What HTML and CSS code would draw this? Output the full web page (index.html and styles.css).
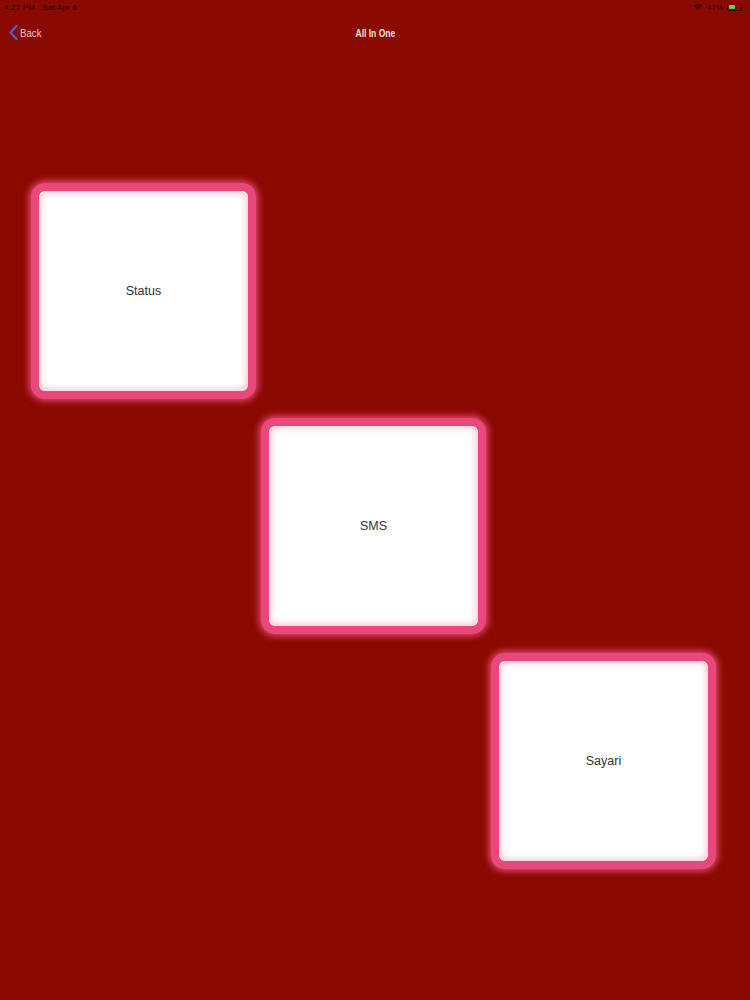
FILE: index.html
```html
<!DOCTYPE html>
<html>
<head>
<meta charset="utf-8">
<link rel="stylesheet" href="styles.css">
</head>
<body>
<div class="screen">
  <div class="statusbar">
    <span class="time">4:27 PM&nbsp;&nbsp;&nbsp;Sat Apr 6</span>
    <span class="sys">
      <svg class="wifi" width="10" height="8" viewBox="0 0 10 8"><path d="M0.5 2.8 A6.5 6.5 0 0 1 9.5 2.8 L8.4 3.9 A5 5 0 0 0 1.6 3.9 Z M2.3 4.6 A4 4 0 0 1 7.7 4.6 L6.6 5.7 A2.5 2.5 0 0 0 3.4 5.7 Z M4.2 6.6 A1.2 1.2 0 0 1 5.8 6.6 L5 7.5 Z" fill="#3a0300"/></svg>
      <span class="pct">47%</span>
      <span class="battery"><span class="level"></span></span>
    </span>
  </div>
  <div class="navbar">
    <div class="back">
      <svg width="9" height="15" viewBox="0 0 9 15"><path d="M7.5 1 L1.5 7.5 L7.5 14" fill="none" stroke="#2f6fd6" stroke-width="2.2" stroke-linecap="round" stroke-linejoin="round"/></svg>
      <span class="back-label">Back</span>
    </div>
    <div class="title">All In One</div>
  </div>
  <div class="grid">
    <div class="card c1"><div class="inner">Status</div></div>
    <div class="card c2"><div class="inner">SMS</div></div>
    <div class="card c3"><div class="inner">Sayari</div></div>
  </div>
</div>
</body>
</html>
```
FILE: styles.css
```css
html, body {
  margin: 0;
  padding: 0;
  background: #8a0900;
}
.screen {
  width: 750px;
  height: 1000px;
  background: #8a0900;
  position: relative;
  overflow: hidden;
  font-family: "Liberation Sans", Arial, sans-serif;
}
.statusbar {
  height: 14px;
  display: flex;
  justify-content: space-between;
  align-items: center;
  padding: 0 8px 0 4px;
  font-size: 8px;
  color: #2e0200;
}
.time { letter-spacing: 0.2px; }
.sys {
  display: flex;
  align-items: center;
  gap: 4px;
}
.pct { font-size: 8px; }
.battery {
  border: 1px solid #2e0200;
  border-radius: 2px;
  padding: 1px;
  box-sizing: border-box;
  display: flex;
  width: 15px;
  height: 8px;
}
.level {
  width: 55%;
  background: #5fd35a;
  border-radius: 1px;
}
.navbar {
  height: 38px;
  position: relative;
  display: flex;
  align-items: center;
  justify-content: center;
}
.back {
  position: absolute;
  left: 9px;
  top: 11px;
  display: flex;
  align-items: center;
  gap: 2px;
  font-family: "Liberation Sans Narrow", "Liberation Sans", sans-serif;
  font-size: 11px;
  color: #eec4c0;
}
.back-label {
  display: inline-block;
  transform: scaleX(0.88);
  transform-origin: left center;
}
.title {
  font-family: "Liberation Sans Narrow", "Liberation Sans", sans-serif;
  font-weight: bold;
  font-size: 10px;
  color: #fbe0dc;
  margin-top: 0;
  transform: scaleX(0.85);
}
.grid {
  display: grid;
  grid-template-columns: repeat(3, 225px);
  grid-template-rows: repeat(3, 216px);
  column-gap: 5px;
  row-gap: 19px;
  padding: 131px 0 0 31px;
}
.card {
  border: 8px solid #e8497a;
  border-radius: 14px;
  background: #fff;
  box-shadow: 0 0 7px 2px #e8497a;
  overflow: hidden;
}
.inner {
  height: 100%;
  border-radius: 8px;
  background: #fff;
  box-shadow: inset 0 0 6px 2px #f7c6d4;
  display: flex;
  align-items: center;
  justify-content: center;
  font-size: 12.5px;
  color: #333;
}
.c1 { grid-column: 1; grid-row: 1; }
.c2 { grid-column: 2; grid-row: 2; }
.c3 { grid-column: 3; grid-row: 3; }
```
